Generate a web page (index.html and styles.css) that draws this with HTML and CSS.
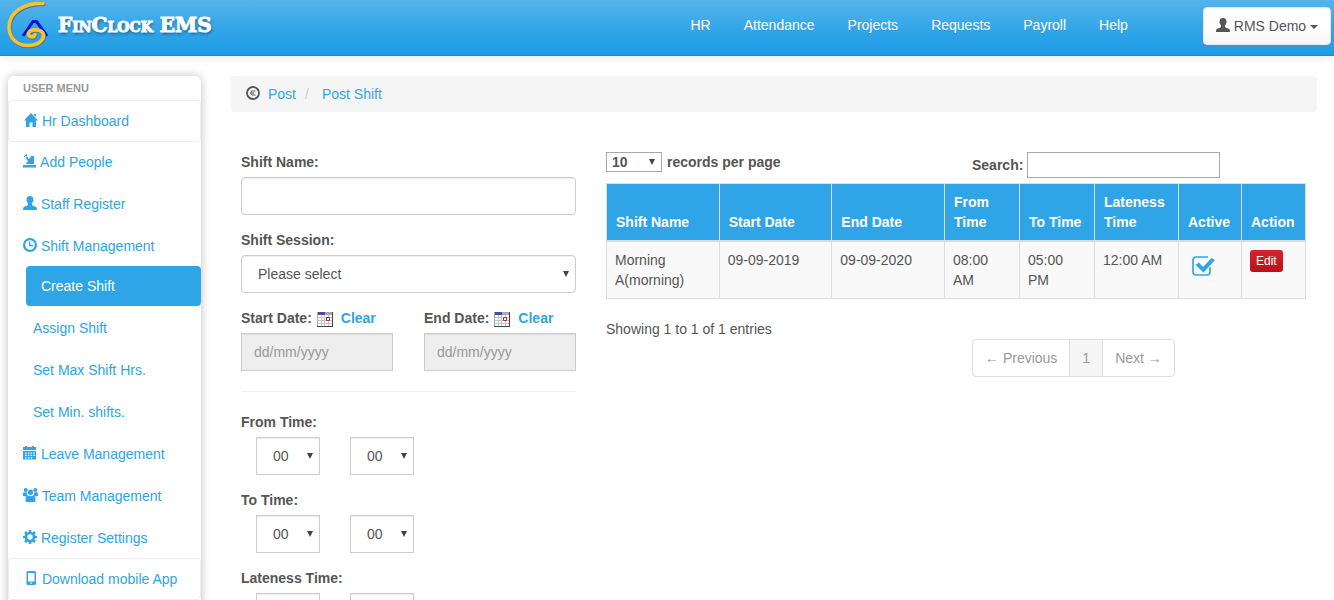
FILE: index.html
```html
<!DOCTYPE html>
<html lang="en">
<head>
<meta charset="utf-8">
<title>FinClock EMS</title>
<link rel="stylesheet" href="styles.css">
</head>
<body>
<svg class="sprite" aria-hidden="true">
  <symbol id="user" viewBox="0 0 14 14"><path d="M7 0C4.600 0 3.500 1.700 3.600 3.900c-.3.200-.2 1.300.4 1.600.2 1 .6 1.600 1 2v1.400C4.400 10 .6 10 .2 12L0 14h14l-.2-2C13.400 10 9.600 10 9 8.900V7.500c.4-.4.800-1 1-2 .6-.3.7-1.400.4-1.600C10.500 1.700 9.400 0 7 0z"/></symbol>
  <symbol id="calendar" viewBox="0 0 16 15"><path d="M0 0H16V15H0z" fill="#fff"/><path d="M1 5.500H15M1 8.500H15M1 11.500H15M4.500 3V14M7.500 3V14M11.500 3V14" stroke="#c4c4cc" fill="none"/><path d="M0 0H8V3H0z" fill="#4b4ba6"/><path d="M8 0H16V3H8z" fill="#a8a8ae"/><path d="M.5 0V15" stroke="#aaa"/><path d="M15.500 0V15M0 14.500H16" stroke="#444" fill="none"/><path d="M9.500 5.500h3v3h-3z" fill="#fff" stroke="#a22a32"/></symbol>
</svg>
<header class="navbar">
  <a class="brand" href="#">
    <svg class="logo" viewBox="0 0 44 46" aria-hidden="true">
      <path d="M17 34L27 19.500H30.500L41 34" fill="none" stroke="#0c12dd" stroke-width="3"/>
      <g fill="none" stroke-linecap="round">
        <path d="M37 1.500C18 1 3 10 3 25C3 37 12 43.500 22 43.500C33 43.500 39 37 37 31.500C35 27 25 26.500 22.500 31C21.500 35 28 36.500 29 32.500" stroke="#54718a" stroke-width="4" transform="translate(.6 .8)"/>
        <path d="M37 1.500C18 1 3 10 3 25C3 37 12 43.500 22 43.500C33 43.500 39 37 37 31.500C35 27 25 26.500 22.500 31C21.500 35 28 36.500 29 32.500" stroke="#f6c32d" stroke-width="3.600"/>
      </g>
    </svg>
    <span class="brand-name">FinClock EMS</span>
  </a>
  <nav class="topnav">
    <a href="#">HR</a><a href="#">Attendance</a><a href="#">Projects</a><a href="#">Requests</a><a href="#">Payroll</a><a href="#">Help</a>
  </nav>
  <button class="user-btn" type="button"><svg class="icon" viewBox="0 0 14 14"><use href="#user"/></svg> RMS Demo <span class="caret"></span></button>
</header>

<div class="layout">
  <aside class="sidebar">
    <h2 class="menu-title">User Menu</h2>
    <ul class="menu">
      <li class="boxed"><a href="#"><svg class="icon" viewBox="0 0 14 14"><path d="M7 0L14 7.500H12V14H8.500V9.500H5.500V14H2V7.500H0L7 0zM10 1h2v3l-2-2z"/></svg> Hr Dashboard</a></li>
      <li><a href="#"><svg class="icon" viewBox="0 0 14 14"><path d="M0 11h13v2.500H0zM4 2.500l2 2.500L8 3 7 2h4v8H2.500L5 7 2.500 4zM1 2h1v1H1zM3 0h1v2H2V1h1z"/></svg> Add People</a></li>
      <li><a href="#"><svg class="icon" viewBox="0 0 14 14"><use href="#user"/></svg> Staff Register</a></li>
      <li><a href="#"><svg class="icon" viewBox="0 0 14 14"><circle cx="7" cy="7" r="5.900" fill="none" stroke="currentColor" stroke-width="2.200"/><path d="M6 3.500h1.300V7H10v1.200H6z"/></svg> Shift Management</a>
        <ul class="submenu">
          <li class="active"><a href="#">Create Shift</a></li>
          <li><a href="#">Assign Shift</a></li>
          <li><a href="#">Set Max Shift Hrs.</a></li>
          <li><a href="#">Set Min. shifts.</a></li>
        </ul>
      </li>
      <li><a href="#"><svg class="icon" viewBox="0 0 14 14"><path fill-rule="evenodd" d="M0 1h2V0h2v1h5V0h2v1h2v3H0zM0 5h13v8.500H0zM2 6.500v1.200h1.600V6.500zM4.800 6.500v1.200h1.600V6.500zM7.600 6.500v1.200h1.600V6.500zM10.400 6.500v1.200h1.600V6.500zM2 8.800V10h1.600V8.800zM4.800 8.800V10h1.600V8.800zM7.600 8.800V10h1.600V8.800zM10.400 8.800V10h1.600V8.800zM2 11.200v1.200h1.600v-1.200zM4.800 11.200v1.200h1.600v-1.200zM7.600 11.200v1.200h1.600v-1.200z"/></svg> Leave Management</a></li>
      <li><a href="#"><svg class="icon icon-wide" viewBox="0 0 15 14"><circle cx="2.700" cy="2" r="2"/><circle cx="12.300" cy="2" r="2"/><circle cx="7.500" cy="4.200" r="2.700"/><path d="M0 8V5.500C0 4 1.500 4 3.800 4.600c0 1.400.4 2 .8 2.600L2.800 8.500zM15 8V5.500c0-1.500-1.500-1.500-3.800-.9 0 1.400-.4 2-.8 2.600l1.800 1.300zM2.500 12.500C2.500 9 3.300 7.600 5 7.600c1.500 1 3.500 1 5 0 1.700 0 2.500 1.400 2.500 4.900 0 1-.5 1.500-1.500 1.500H4c-1 0-1.500-.5-1.500-1.500z"/></svg> Team Management</a></li>
      <li><a href="#"><svg class="icon" viewBox="0 0 14 14"><circle cx="7" cy="7" r="4" fill="none" stroke="currentColor" stroke-width="2.600"/><path d="M7 0V3M7 11V14M0 7H3M11 7H14M2 2L4 4M10 10L12 12M12 2L10 4M4 10L2 12" stroke="currentColor" stroke-width="2.600"/></svg> Register Settings</a></li>
      <li class="boxed"><a href="#"><svg class="icon" viewBox="0 0 14 14"><path fill-rule="evenodd" d="M4 0h6.500Q12 0 12 1.500v11Q12 14 10.500 14H4Q2.500 14 2.500 12.500v-11Q2.500 0 4 0zM4 2v8.500h6.500V2zM6.500 11.600v1.200H8v-1.200z"/></svg> Download mobile App</a></li>
    </ul>
  </aside>

  <main class="content">
    <nav class="breadcrumb" aria-label="Breadcrumb">
      <svg class="icon" viewBox="0 0 14 14"><circle cx="7" cy="7" r="6" fill="none" stroke="currentColor" stroke-width="1.800"/><path d="M9.500 5H6.500Q4.700 5 4.700 7T6.500 9H9.500M5 7h3" fill="none" stroke="currentColor" stroke-width="1"/></svg>
      <a href="#">Post</a><span class="sep">/</span><a href="#">Post Shift</a>
    </nav>
    <div class="columns">
      <form class="shift-form">
        <div class="field">
          <label for="name">Shift Name:</label>
          <input class="control" id="name" type="text">
        </div>
        <div class="field">
          <label for="session">Shift Session:</label>
          <span class="select-wrap"><select class="control" id="session"><option>Please select</option></select></span>
        </div>
        <div class="dates">
          <div>
            <div class="date-label"><label for="start">Start Date:</label><svg class="cal" viewBox="0 0 16 15"><use href="#calendar"/></svg><a href="#">Clear</a></div>
            <input class="control square" id="start" type="text" placeholder="dd/mm/yyyy" readonly>
          </div>
          <div>
            <div class="date-label"><label for="end">End Date:</label><svg class="cal" viewBox="0 0 16 15"><use href="#calendar"/></svg><a href="#">Clear</a></div>
            <input class="control square" id="end" type="text" placeholder="dd/mm/yyyy" readonly>
          </div>
        </div>
        <hr>
        <div class="field">
          <label for="from-h">From Time:</label>
          <div class="times">
            <span class="select-wrap"><select class="control square" id="from-h"><option>00</option></select></span>
            <span class="select-wrap"><select class="control square" aria-label="From minutes"><option>00</option></select></span>
          </div>
        </div>
        <div class="field">
          <label for="to-h">To Time:</label>
          <div class="times">
            <span class="select-wrap"><select class="control square" id="to-h"><option>00</option></select></span>
            <span class="select-wrap"><select class="control square" aria-label="To minutes"><option>00</option></select></span>
          </div>
        </div>
        <div class="field">
          <label for="late-h">Lateness Time:</label>
          <div class="times">
            <span class="select-wrap"><select class="control square" id="late-h"><option>00</option></select></span>
            <span class="select-wrap"><select class="control square" aria-label="Lateness minutes"><option>00</option></select></span>
          </div>
        </div>
      </form>

      <section class="records">
        <div class="halves tools">
          <label class="length"><span class="select-wrap"><select><option>10</option></select></span> records per page</label>
          <label class="search">Search: <input type="search"></label>
        </div>
        <table>
          <colgroup><col><col><col><col class="c-time"><col class="c-time"><col class="c-late"><col class="c-active"><col class="c-action"></colgroup>
          <thead><tr><th>Shift Name</th><th>Start Date</th><th>End Date</th><th>From Time</th><th>To Time</th><th>Lateness Time</th><th>Active</th><th>Action</th></tr></thead>
          <tbody><tr>
            <td>Morning A(morning)</td><td>09-09-2019</td><td>09-09-2020</td><td>08:00 AM</td><td>05:00 PM</td><td>12:00 AM</td>
            <td><svg class="check" viewBox="0 0 24 24"><path d="M17 3H5Q2 3 2 6V18Q2 21 5 21H16Q19 21 19 18V13" fill="none" stroke="currentColor" stroke-width="1.600"/><path d="M4.500 11L8 8.500L12 13L20.500 4L24 6L12.500 18.500Z" fill="currentColor"/></svg></td>
            <td><button class="edit" type="button">Edit</button></td>
          </tr></tbody>
        </table>
        <div class="halves">
          <p class="info">Showing 1 to 1 of 1 entries</p>
          <nav class="pager" aria-label="Pages"><a href="#">← Previous</a><a href="#" class="current">1</a><a href="#">Next →</a></nav>
        </div>
      </section>
    </div>
  </main>
</div>
</body>
</html>
```
FILE: styles.css
```css
* { box-sizing: border-box; }
body {
  margin: 0;
  height: 100vh;
  overflow: hidden;
  font: 14px/20px "Liberation Sans", Arial, sans-serif;
  color: #555;
  background: #fff;
}
a { color: #2fa4e7; text-decoration: none; }
ul { list-style: none; margin: 0; padding: 0; }
input, select, button { font: inherit; color: inherit; }
label { font-weight: bold; }
.sprite { display: none; }
.icon { width: 14px; height: 14px; fill: currentColor; vertical-align: -1px; }
.icon-wide { width: 15px; }

.navbar {
  display: flex;
  align-items: flex-start;
  height: 56px;
  padding-right: 3px;
  background: linear-gradient(#54b4eb, #2fa4e7 60%, #1d9ce5);
  border-bottom: 1px solid #178acc;
  box-shadow: 0 1px 10px rgba(0, 0, 0, .1);
}
.brand { display: flex; gap: 8px; padding: 2px 0 0 6px; margin-right: auto; color: #fff; }
.logo { width: 44px; height: 46px; }
.brand-name {
  font: bold 20px/46px "DejaVu Serif", serif;
  font-variant: small-caps;
  -webkit-text-stroke: 1px #fff;
  text-shadow: 1px 2px 3px rgba(0, 0, 0, .5);
}
.topnav { display: flex; gap: 33px; padding-top: 15px; margin-right: 75px; }
.topnav a { color: #fff; text-shadow: 0 1px 0 rgba(0, 0, 0, .1); }
.user-btn {
  height: 38px;
  margin-top: 7px;
  padding: 0 12px;
  border: 1px solid #e6e6e6;
  border-radius: 4px;
  background: linear-gradient(#fff 50%, #f5f5f5);
}
.caret { display: inline-block; border: 4px solid transparent; border-top-color: #555; border-bottom: 0; vertical-align: 2px; }

.layout { display: flex; align-items: flex-start; gap: 30px; padding: 20px 17px 0 8px; }
.sidebar { flex: 0 0 193px; border-radius: 6px; background: #fff; box-shadow: 0 0 10px #bdbdbd; padding-bottom: 20px; }
.menu-title { margin: 0; padding: 2px 15px; font-size: 11px; line-height: 20px; color: #999; text-transform: uppercase; }
.menu > li + li, .submenu li + li { margin-top: 2px; }
.menu a { display: block; padding: 10px 15px; white-space: nowrap; }
.menu > .boxed { border: 1px solid #eee; border-radius: 4px; }
.menu > .boxed + li { margin-top: 0; }
.menu > li + .boxed { margin-top: 0; }
.submenu { margin-left: 18px; }
.submenu a { padding-left: 7px; }
.submenu .active a { padding-left: 15px; background: #2fa4e7; color: #fff; border-radius: 4px; }

.content { flex: 1; min-width: 0; }
.breadcrumb { display: flex; align-items: center; padding: 8px 15px; border-radius: 4px; background: #f5f5f5; }
.breadcrumb .icon { margin: 0 8px 2px 0; }
.sep { padding: 0 13px 0 9px; color: #ccc; }
.columns { display: grid; grid-template-columns: 1fr 2fr; margin: 0 -4px 0 -5px; padding-top: 40px; }
.shift-form, .records { padding: 0 15px; min-width: 0; }

.field { margin-bottom: 15px; }
.field > label { display: block; margin-bottom: 5px; }
.control {
  display: block;
  width: 100%;
  height: 38px;
  padding: 8px 12px;
  border: 1px solid #ccc;
  border-radius: 4px;
  background: #fff;
  box-shadow: inset 0 1px 1px rgba(0, 0, 0, .075);
}
.square { border-radius: 0; }
.control:read-only:is(input) { background: #eee; }
.control::placeholder { color: #999; }
select { appearance: none; }
select.control { padding: 0 16px; }
.select-wrap { position: relative; display: block; }
.select-wrap::after {
  content: "";
  position: absolute;
  right: 7px;
  top: 50%;
  margin-top: -3px;
  border: 3px solid transparent;
  border-top: 6px solid #444;
  border-bottom: 0;
  pointer-events: none;
}
.dates { display: grid; grid-template-columns: 1fr 1fr; gap: 31px; }
.date-label { display: flex; align-items: center; gap: 5px; margin-bottom: 5px; font-weight: bold; }
.date-label a { margin-left: 3px; }
.cal { width: 16px; height: 15px; margin-top: 2px; }
hr { margin: 20px 0; border: 0; border-top: 1px solid #eee; }
.times { display: flex; gap: 30px; padding-left: 15px; }
.times .select-wrap { width: 64px; }

.halves { display: grid; grid-template-columns: 1fr 1fr; gap: 32px; }
.tools { margin-bottom: 5px; }
.length { display: flex; align-items: flex-start; gap: 5px; }
.length .select-wrap { width: 56px; }
.length select { display: block; width: 100%; height: 20px; padding: 0 5px; border: 1px solid #a9a9a9; background: #fff; font-weight: bold; line-height: 18px; }
.search { display: flex; align-items: center; gap: 4px; }
.search input { width: 193px; height: 26px; border: 1px solid #a9a9a9; background: #fff; padding: 2px; }
table { width: 100%; table-layout: fixed; border-collapse: collapse; border: 1px solid #ddd; }
.c-time { width: 75px; }
.c-late { width: 84px; }
.c-active { width: 63px; }
.c-action { width: 64px; }
th, td { padding: 8px; border: 1px solid #ddd; text-align: left; }
th { vertical-align: bottom; color: #fff; background: #2fa4e7; border-bottom-width: 2px; padding: 8px 4px 8px 9px; }
td { vertical-align: top; background: #f9f9f9; }
.check { display: block; width: 24px; height: 24px; margin: 4px 0 0 4px; color: #2fa4e7; }
.edit {
  display: block;
  height: 22px;
  padding: 0 6px;
  border: 0;
  border-radius: 3px;
  background: linear-gradient(#d9232b, #b5121b);
  color: #fff;
  font-size: 12px;
}
.info { margin: 20px 0 0; }
.pager { display: flex; margin-top: 40px; justify-self: start; border: 1px solid #ddd; border-radius: 4px; }
.pager a { padding: 8px 12px; color: #999; }
.pager a + a { border-left: 1px solid #ddd; }
.pager .current { background: #f5f5f5; }
```
